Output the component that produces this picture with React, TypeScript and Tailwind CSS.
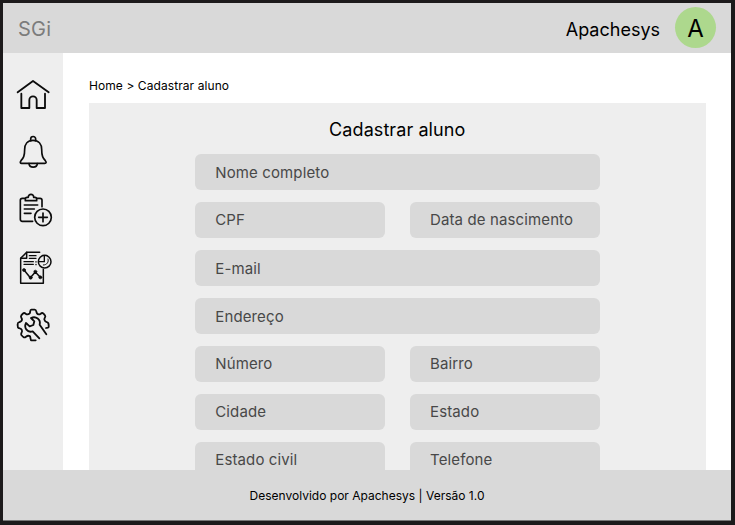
import type { ReactNode } from "react";

function Icon({ children, className = "" }: { children: ReactNode; className?: string }) {
  return (
    <svg
      viewBox="0 0 150 150"
      className={`block h-[50px] w-[50px] shrink-0 ${className}`}
      fill="none"
      stroke="#0c0c0c"
      strokeWidth="5.5"
      strokeLinecap="round"
      strokeLinejoin="round"
    >
      {children}
    </svg>
  );
}

function Sidebar() {
  return (
    <nav className="flex w-[60.4px] shrink-0 flex-col items-center bg-[#eeeeee] pt-[19px]">
      <Icon>
        <path d="M29 61 L75 27 L122 61" />
        <path d="M40 65 V108 H64 V84 A11 11 0 0 1 86 84 V108 H111 V65" />
      </Icon>
      <Icon className="mt-2">
        <path strokeWidth="5" d="M68 32 V27 A7.5 7.5 0 0 1 83 27 V32" />
        <path strokeWidth="5" d="M75 31 C58 31 50 43 50 58 C50 79 46 84 39 92 C35 97 37 100 41 100 H110 C115 100 116 97 112 92 C105 84 101 79 101 58 C101 43 93 31 75 31 Z" />
        <path strokeWidth="5" d="M63 101 C64 115 87 115 88 101" />
      </Icon>
      <Icon className="mt-[7px]">
        <path strokeWidth="5" d="M51 34 H43 Q37 34 37 40 V97 Q37 103 43 103 H74 M87 34 H96 Q102 34 102 40 V59" />
        <path strokeWidth="5" d="M52 41 V36 Q52 31 57 31 H61 C60 19 78 19 77 31 H81 Q86 31 86 36 V41 Z" />
        <path strokeWidth="5" d="M49 54 H89 M49 66 H79 M49 79 H69" />
        <circle strokeWidth="5" cx="105" cy="91" r="25" />
        <path strokeWidth="5" d="M105 78 V104 M92 91 H118" />
      </Icon>
      <Icon className="mt-[6px]">
        <path strokeWidth="4.5" d="M95 28 H56 L38 46 V121 H106 V79" />
        <path strokeWidth="4.5" d="M56 28 V46 H38" />
        <path strokeWidth="4" d="M64 38 H84 M64 46 H84 M48 56 H76 M48 64 H76 M84 56 V57 M84 64 V65" />
        <circle strokeWidth="4.5" cx="110" cy="56" r="19" />
        <path strokeWidth="4" d="M109 38 V56 H92" />
        <path strokeWidth="3" d="M120 48 C123 57 117 66 106 66" />
        <path strokeWidth="4.5" d="M48 81 L67 104 L82 87 L96 102" />
        <g fill="#0c0c0c" strokeWidth="2">
          <circle cx="48" cy="81" r="4.5" />
          <circle cx="68" cy="104" r="4.5" />
          <circle cx="82" cy="86" r="4.5" />
          <circle cx="97" cy="103" r="4.5" />
        </g>
      </Icon>
      <Icon className="mt-[7px]">
        <path d="M83 121 H70 C67 121 68 112 66 109 C62 106 58 107 54 110 C49 114 47 113 40 105 C37 101 44 96 42 91 C40 85 37 85 32 84 C28 83 29 79 29 73 C29 67 30 67 35 66 C40 65 42 62 42 58 C42 54 36 51 40 46 C46 39 48 37 53 41 C58 45 62 43 65 40 C68 36 65 29 70 29 H80 C86 29 84 36 87 40 C90 44 94 44 98 41 C103 37 105 39 111 46 C115 50 108 54 109 59 C110 64 113 66 118 67 C123 68 122 71 122 81 C121 84 117 83 114 84" />
        <path d="M94 115 L74 94 C58 99 47 84 54 69 L65 79 L76 75 L79 64 L69 54 C84 47 99 59 95 74 L115 103" />
      </Icon>
    </nav>
  );
}

function Field({ label, wide = false }: { label: string; wide?: boolean }) {
  return (
    <div
      className={`flex h-[35.5px] items-center rounded-[6px] bg-[#d9d9d9] pl-[20.3px] text-[15px] leading-none tracking-[0.12px] text-[#484848] ${wide ? "col-span-2 pt-[1.5px]" : ""}`}
    >
      <span>{label}</span>
    </div>
  );
}

export default function App() {
  return (
    <div className="h-[525px] w-[735px] overflow-hidden bg-[#1c1a1b] pt-[2.5px] pr-1 pl-[3px] font-['Inter',sans-serif] text-black">
      <div className="flex h-[518px] flex-col border-b border-[#777]">
        <header className="flex h-[50.5px] shrink-0 items-center bg-[#d9d9d9] pr-[15px] pl-[15px]">
          <span className="pt-[2px] text-[20px] tracking-[0.2px] text-[#7c7c7c]">SGi</span>
          <span className="ml-auto pt-[3px] text-[18px]">Apachesys</span>
          <span className="ml-[15px] flex h-[41px] w-[41px] items-center justify-center rounded-full bg-[#add88d] pt-[2px] text-[24px]">
            A
          </span>
        </header>
        <div className="flex min-h-0 flex-1">
          <Sidebar />
          <main className="flex flex-1 flex-col overflow-hidden bg-white pr-[25.5px] pl-[25.6px]">
            <div className="mt-6 h-[26px] shrink-0 text-[12px] leading-[18px] tracking-[0.08px]">Home &gt; Cadastrar aluno</div>
            <section className="min-h-0 flex-1 bg-[#eeeeee] px-[106px]">
              <h1 className="h-[51px] pt-[14px] text-center text-[18px] leading-[26px] tracking-[0.08px]">
                Cadastrar aluno
              </h1>
              <div className="grid grid-cols-2 gap-x-[25px] gap-y-[12.5px]">
                <Field label="Nome completo" wide />
                <Field label="CPF" />
                <Field label="Data de nascimento" />
                <Field label="E-mail" wide />
                <Field label="Endereço" wide />
                <Field label="Número" />
                <Field label="Bairro" />
                <Field label="Cidade" />
                <Field label="Estado" />
                <Field label="Estado civil" />
                <Field label="Telefone" />
              </div>
            </section>
          </main>
        </div>
        <footer className="flex h-[50px] shrink-0 items-center justify-center bg-[#d9d9d9] pt-[2px] text-[12px] tracking-[0.01px]">
          Desenvolvido por Apachesys | Versão 1.0
        </footer>
      </div>
    </div>
  );
}
